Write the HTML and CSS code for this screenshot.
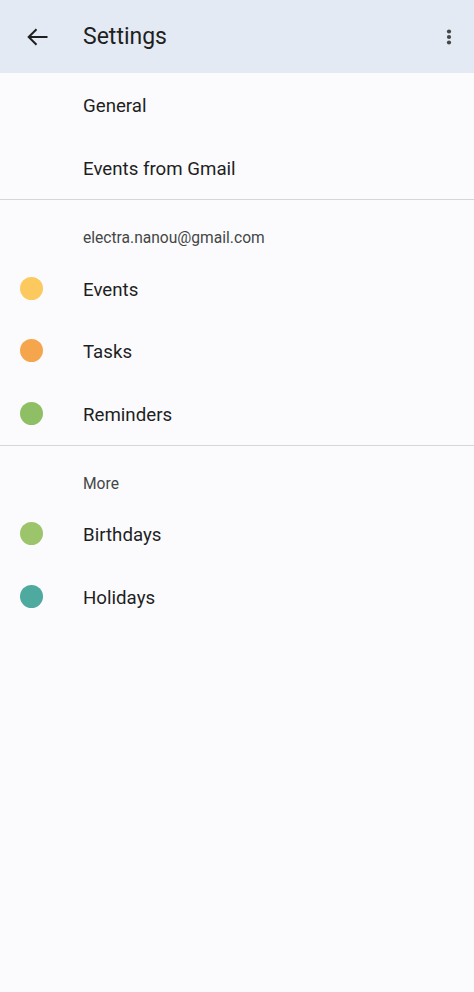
FILE: index.html
```html
<!DOCTYPE html>
<html lang="en">
<head>
    <meta charset="UTF-8">
    <meta name="viewport" content="width=device-width, initial-scale=1.0">
    <title>Settings</title>
    <link rel="stylesheet" href="styles.css">
</head>
<body>

    <header class="topbar">
        <svg class="back" width="24" height="24" viewBox="0 0 24 24">
            <path d="M21.5 12H3M10.5 4.2L2.7 12l7.8 7.8" fill="none" stroke="#1f1f1f" stroke-width="2"/>
        </svg>
        <h1 class="title">Settings</h1>
        <svg class="more" width="24" height="24" viewBox="0 0 24 24">
            <circle cx="12" cy="6.5" r="2.1" fill="#444746"/>
            <circle cx="12" cy="12" r="2.1" fill="#444746"/>
            <circle cx="12" cy="17.5" r="2.1" fill="#444746"/>
        </svg>
    </header>

    <!-- General -->
    <section class="group">
        <div class="row plain"><span class="label">General</span></div>
        <div class="row plain"><span class="label">Events from Gmail</span></div>
    </section>

    <!-- Account calendars -->
    <section class="group">
        <div class="group-title">electra.nanou@gmail.com</div>
        <div class="row"><span class="dot events"></span><span class="label">Events</span></div>
        <div class="row"><span class="dot tasks"></span><span class="label">Tasks</span></div>
        <div class="row"><span class="dot reminders"></span><span class="label">Reminders</span></div>
    </section>

    <!-- Other calendars -->
    <section class="group last">
        <div class="group-title">More</div>
        <div class="row"><span class="dot birthdays"></span><span class="label">Birthdays</span></div>
        <div class="row"><span class="dot holidays"></span><span class="label">Holidays</span></div>
    </section>

</body>
</html>
```

FILE: styles.css
```css
html { background: #fbfbfe; }
body { margin: 0; min-height: 992px; background: #fbfbfe; font-family: Roboto, "Noto Sans", sans-serif; color: #1f1f1f; }

.topbar { display: flex; align-items: center; height: 73px; background: #e3eaf3; }
.back { margin-left: 25.5px; flex: none; }
.title { margin: 0 0 0 33.5px; font-size: 23px; font-weight: 400; flex: 1; color: #1f1f1f; }
.more { margin-right: 13px; flex: none; }

.group { border-bottom: 1px solid #d6d6d9; }
.group.last { border-bottom: none; }
.group-title { padding: 28px 0 9px 83px; height: 20px; line-height: 20px; font-size: 15.6px; color: #444746; }

.row { display: flex; align-items: center; height: 62.5px; padding-left: 20px; font-size: 18.7px; }
.row.plain { padding-left: 83px; height: 63px; }
.label { margin-top: 3px; }
.dot { width: 23px; height: 23px; border-radius: 50%; margin-right: 40px; flex: none; }
.events { background: #fcc95e; }
.tasks { background: #f5a64c; }
.reminders { background: #8fbf64; }
.birthdays { background: #9cc46a; }
.holidays { background: #4ea99f; }
```
